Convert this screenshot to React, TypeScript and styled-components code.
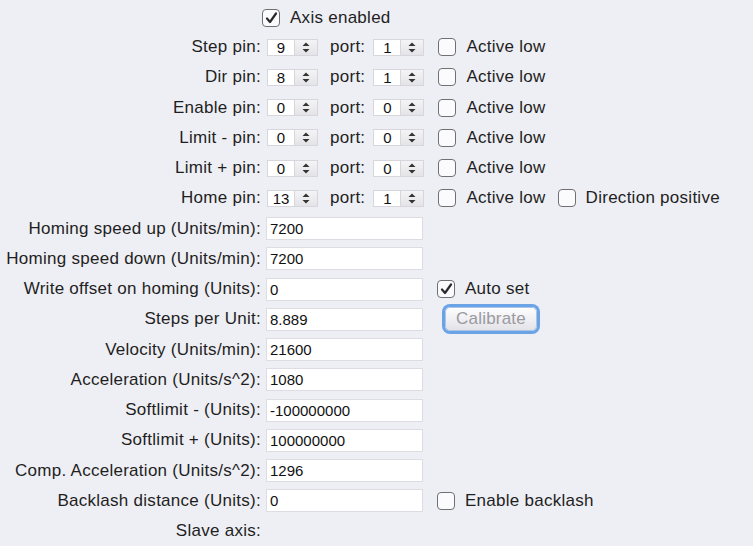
import React from "react";
import styled, { createGlobalStyle } from "styled-components";

const GlobalStyle = createGlobalStyle`
  html, body {
    margin: 0;
    padding: 0;
    background: #eeeef5;
  }
  body {
    font-family: "Liberation Sans", Arial, sans-serif;
    color: #1f1f22;
    width: 753px;
    height: 546px;
    overflow: hidden;
  }
`;

const Form = styled.div`
  display: grid;
  grid-template-columns: 261px 1fr;
  grid-template-rows: 28px;
  grid-auto-rows: 30.25px;
  column-gap: 5px;
  align-items: center;
  padding-top: 4px;
`;

const Label = styled.div`
  text-align: right;
  font-size: 17px;
  letter-spacing: 0.27px;
  white-space: nowrap;
  line-height: 20px;
`;

const Controls = styled.div<{ $shift?: number }>`
  display: flex;
  align-items: center;
  margin-left: ${(p) => p.$shift ?? 0}px;
  font-size: 17px;
  letter-spacing: 0.27px;
  white-space: nowrap;
`;

const Spin = styled.div`
  display: flex;
  width: 51px;
  height: 17px;
  box-sizing: border-box;
  border: 1px solid #d6d6dc;
  background: #fff;
  margin-left: 1px;
`;

const SpinValue = styled.div`
  flex: 1;
  font-size: 15px;
  line-height: 15px;
  letter-spacing: 0;
  text-align: center;
  color: #111;
`;

const SpinArrows = styled.div`
  width: 22px;
  display: flex;
  align-items: center;
  justify-content: center;
  background: linear-gradient(#f4f4f6, #e4e4e8);
  border-left: 1px solid #d6d6dc;
`;

const PortText = styled.span<{ $left: number; $right: number }>`
  margin-left: ${(p) => p.$left}px;
  margin-right: ${(p) => p.$right}px;
`;

const Check = styled.span<{ $left: number }>`
  display: inline-flex;
  align-items: center;
  justify-content: center;
  width: 18px;
  height: 18px;
  box-sizing: border-box;
  border: 1.5px solid #6f6f74;
  border-radius: 4px;
  background: #fbfbfd;
  margin-left: ${(p) => p.$left}px;
  margin-right: 10px;
`;

const TextInput = styled.div`
  width: 157px;
  height: 23px;
  box-sizing: border-box;
  border: 1px solid #dcdce2;
  background: #fff;
  font-size: 15px;
  letter-spacing: 0;
  line-height: 21px;
  padding-left: 3px;
  color: #111;
`;

const Button = styled.div`
  margin-left: 22px;
  width: 92px;
  height: 24px;
  box-sizing: border-box;
  border: 1px solid #a9c6e8;
  border-radius: 5px;
  box-shadow: 0 0 0 3px #6aa3e6;
  background: linear-gradient(#fdfdfe, #e3e3e8);
  color: #9a9aa0;
  font-size: 17px;
  letter-spacing: 0.2px;
  line-height: 22px;
  text-align: center;
`;

const Arrows = () => (
  <svg width="8" height="11" viewBox="0 0 8 11">
    <path d="M4 0.5 L7.5 4 L0.5 4 Z" fill="#333" />
    <path d="M4 10.5 L7.5 7 L0.5 7 Z" fill="#333" />
  </svg>
);

const Tick = () => (
  <svg width="13" height="12" viewBox="0 0 13 12">
    <path d="M2 6.5 L5 10 L11 1.5" fill="none" stroke="#2a2a2e" strokeWidth="2.2" strokeLinecap="round" strokeLinejoin="round" />
  </svg>
);

const CheckBox = ({ checked, left, children }: { checked?: boolean; left: number; children: React.ReactNode }) => (
  <>
    <Check $left={left}>{checked && <Tick />}</Check>
    <span>{children}</span>
  </>
);

const SpinBox = ({ value }: { value: string }) => (
  <Spin>
    <SpinValue>{value}</SpinValue>
    <SpinArrows>
      <Arrows />
    </SpinArrows>
  </Spin>
);

const pins: { label: string; pin: string; port: string; dir?: boolean }[] = [
  { label: "Step pin:", pin: "9", port: "1" },
  { label: "Dir pin:", pin: "8", port: "1" },
  { label: "Enable pin:", pin: "0", port: "0" },
  { label: "Limit - pin:", pin: "0", port: "0" },
  { label: "Limit + pin:", pin: "0", port: "0" },
  { label: "Home pin:", pin: "13", port: "1", dir: true },
];

const fields: { label: string; value: string; extra?: "auto" | "calib" | "backlash" }[] = [
  { label: "Homing speed up (Units/min):", value: "7200" },
  { label: "Homing speed down (Units/min):", value: "7200" },
  { label: "Write offset on homing (Units):", value: "0", extra: "auto" },
  { label: "Steps per Unit:", value: "8.889", extra: "calib" },
  { label: "Velocity (Units/min):", value: "21600" },
  { label: "Acceleration (Units/s^2):", value: "1080" },
  { label: "Softlimit - (Units):", value: "-100000000" },
  { label: "Softlimit + (Units):", value: "100000000" },
  { label: "Comp. Acceleration (Units/s^2):", value: "1296" },
  { label: "Backlash distance (Units):", value: "0", extra: "backlash" },
];

export default function App() {
  return (
    <>
      <GlobalStyle />
      <Form>
        <Label />
        <Controls $shift={-4}>
          <CheckBox checked left={0}>Axis enabled</CheckBox>
        </Controls>
        {pins.map((p) => (
          <React.Fragment key={p.label}>
            <Label>{p.label}</Label>
            <Controls>
              <SpinBox value={p.pin} />
              <PortText $left={12} $right={7}>port:</PortText>
              <SpinBox value={p.port} />
              <CheckBox left={14}>Active low</CheckBox>
              {p.dir && <CheckBox left={12}>Direction positive</CheckBox>}
            </Controls>
          </React.Fragment>
        ))}
        {fields.map((f) => (
          <React.Fragment key={f.label}>
            <Label>{f.label}</Label>
            <Controls>
              <TextInput>{f.value}</TextInput>
              {f.extra === "auto" && <CheckBox checked left={14}>Auto set</CheckBox>}
              {f.extra === "calib" && <Button>Calibrate</Button>}
              {f.extra === "backlash" && <CheckBox left={14}>Enable backlash</CheckBox>}
            </Controls>
          </React.Fragment>
        ))}
        <Label>Slave axis:</Label>
        <Controls />
      </Form>
    </>
  );
}
